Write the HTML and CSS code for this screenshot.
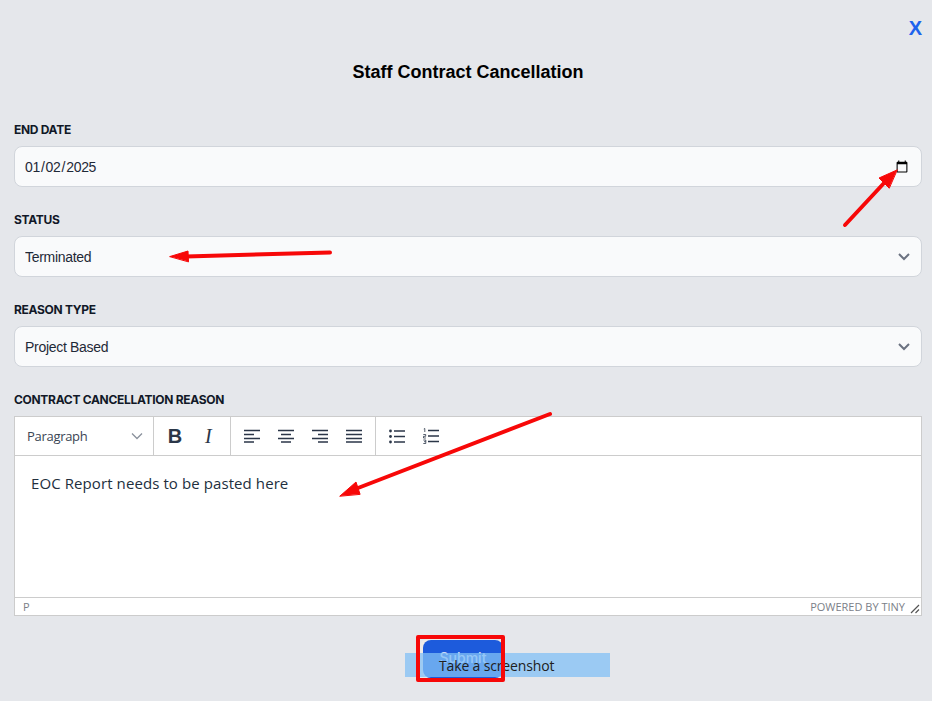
FILE: index.html
```html
<!DOCTYPE html>
<html lang="en">
<head>
<meta charset="utf-8">
<title>Staff Contract Cancellation</title>
<link rel="stylesheet" href="styles.css">
</head>
<body>
<main class="page">
  <div class="close-row"><button class="close" type="button">X</button></div>
  <h1 class="title">Staff Contract Cancellation</h1>
  <form class="form">
    <div class="field">
      <label class="label" for="end">END DATE</label>
      <input class="control" id="end" type="date" value="2025-01-02">
    </div>
    <div class="field">
      <label class="label" for="status">STATUS</label>
      <select class="control select" id="status"><option>Terminated</option></select>
    </div>
    <div class="field">
      <label class="label" for="reason">REASON TYPE</label>
      <select class="control select" id="reason"><option>Project Based</option></select>
    </div>
    <div class="field">
      <span class="label">CONTRACT CANCELLATION REASON</span>
      <div class="editor">
        <div class="toolbar">
          <div class="group group-format">
            <span>Paragraph</span>
            <svg class="fmt-chev" width="12" height="8" viewBox="0 0 12 8"><path d="M1 1.500l5 5 5-5" fill="none" stroke="#8a919c" stroke-width="1.300"/></svg>
          </div>
          <div class="group group-style">
            <span class="tool-b">B</span>
            <span class="tool-i">I</span>
          </div>
          <div class="group group-align">
            <svg class="tool" width="16" height="14" viewBox="0 0 16 14"><path d="M0 1.500h16M0 5.500h10M0 9.500h16M0 13h10" stroke="#2b3648" stroke-width="1.500"/></svg>
            <svg class="tool" width="16" height="14" viewBox="0 0 16 14"><path d="M0 1.500h16M3 5.500h10M0 9.500h16M3 13h10" stroke="#2b3648" stroke-width="1.500"/></svg>
            <svg class="tool" width="16" height="14" viewBox="0 0 16 14"><path d="M0 1.500h16M6 5.500h10M0 9.500h16M6 13h10" stroke="#2b3648" stroke-width="1.500"/></svg>
            <svg class="tool" width="16" height="14" viewBox="0 0 16 14"><path d="M0 1.500h16M0 5.500h16M0 9.500h16M0 13h16" stroke="#2b3648" stroke-width="1.500"/></svg>
          </div>
          <div class="group group-lists">
            <svg class="tool" width="16" height="15" viewBox="0 0 16 15"><path d="M5 2h11M5 7.500h11M5 13h11" stroke="#2b3648" stroke-width="1.500"/><circle cx="1.500" cy="2" r="1.400" fill="#2b3648"/><circle cx="1.500" cy="7.500" r="1.400" fill="#2b3648"/><circle cx="1.500" cy="13" r="1.400" fill="#2b3648"/></svg>
            <svg class="tool" width="16" height="16" viewBox="0 0 16 16"><path d="M5 2.500h11M5 8h11M5 13.500h11" stroke="#2b3648" stroke-width="1.500"/><path d="M.8 1l1-.5V4M.3 6.500h2.400V8.300H.5V10h2.400M.3 12h2.500v3.500H.3M1 13.700h1.800" fill="none" stroke="#2b3648" stroke-width=".8"/></svg>
          </div>
        </div>
        <div class="content">EOC Report needs to be pasted here</div>
        <div class="statusbar">
          <span>P</span>
          <span class="brand">POWERED BY TINY</span>
          <svg class="grip" width="10" height="10" viewBox="0 0 10 10"><path d="M1 9l8-8M5.500 9L9 5.500" stroke="#555" stroke-width="1.200"/></svg>
        </div>
      </div>
    </div>
    <div class="actions">
      <button class="submit" type="button">Submit</button>
    </div>
  </form>
</main>

<div class="shot-tip">Take a screenshot</div>
<div class="shot-box"></div>

<svg class="arrows" width="932" height="701" viewBox="0 0 932 701" aria-hidden="true">
  <g fill="#f70808" stroke="#f70808" stroke-linecap="round">
    <path d="M845 225L885 182" stroke-width="4" fill="none"/>
    <path d="M897 170L879 178L889 188Z" stroke-width="1"/>
    <path d="M330 252.500L186 256.500" stroke-width="4" fill="none"/>
    <path d="M170 256.500L188 251L188.500 261.500Z" stroke-width="1"/>
    <path d="M550 414L358 488" stroke-width="4" fill="none"/>
    <path d="M340 496L356 482L360 494Z" stroke-width="1"/>
  </g>
</svg>
</body>
</html>
```
FILE: styles.css
```css
* { box-sizing: border-box; }

html, body {
  margin: 0;
  height: 701px;
  overflow: hidden;
}

body {
  position: relative;
  background: #e5e7eb;
  font-family: "Inter", "Liberation Sans", sans-serif;
  color: #111827;
}

.page {
  padding: 16px 10px 0 14px;
}

.close-row {
  display: flex;
  justify-content: flex-end;
  height: 24px;
}

.close {
  border: 0;
  padding: 0;
  background: none;
  color: #1d63ed;
  font: 700 20px/24px "Liberation Sans", sans-serif;
}

.title {
  margin: 20px 0 0;
  text-align: center;
  font: 700 18px/24px "Liberation Sans", sans-serif;
  color: #000;
}

.form {
  margin-top: 36px;
  display: flex;
  flex-direction: column;
  gap: 23px;
}

.field {
  display: flex;
  flex-direction: column;
}

.label {
  display: block;
  height: 20px;
  margin-bottom: 6px;
  font: 700 12px/20px "Inter", "Liberation Sans", sans-serif;
  letter-spacing: -0.3px;
  color: #111827;
}

.control {
  display: block;
  width: 100%;
  height: 41px;
  margin: 0;
  padding: 0 10px;
  background-color: #f9fafb;
  border: 1px solid #d1d5db;
  border-radius: 8px;
  font: 14px "Liberation Sans", sans-serif;
  letter-spacing: -0.3px;
  color: #1f2937;
}

input.control { padding-left: 9px; }

.select {
  appearance: none;
  padding-right: 32px;
  background-image: url("data:image/svg+xml,%3Csvg xmlns='http://www.w3.org/2000/svg' width='14' height='9' viewBox='0 0 14 9'%3E%3Cpath d='M2 2l5 5 5-5' fill='none' stroke='%236b7280' stroke-width='2'/%3E%3C/svg%3E");
  background-repeat: no-repeat;
  background-position: right 10px center;
}

.editor {
  height: 200px;
  display: flex;
  flex-direction: column;
  background: #fff;
  border: 1px solid #ccc;
}

.toolbar {
  display: flex;
  height: 39px;
  flex: none;
  border-bottom: 1px solid #ccc;
  font-family: "Open Sans", "Noto Sans", sans-serif;
  color: #2b3648;
}

.group {
  display: flex;
  align-items: center;
  border-right: 1px solid #ccc;
}

.group-format {
  width: 139px;
  padding: 0 10px 0 12px;
  justify-content: space-between;
  font-size: 13px;
  letter-spacing: -0.3px;
  color: #3b4554;
}

.group-style { width: 77px; padding-left: 11px; }

.tool-b {
  width: 20px;
  font: 700 20px "Liberation Sans", sans-serif;
  text-align: center;
}

.tool-i {
  margin-left: 20px;
  font: italic 20px "Liberation Serif", serif;
}

.group-align { width: 145px; padding-left: 13px; gap: 18px; }

.group-lists { border-right: 0; padding-left: 13px; gap: 18px; }

.content {
  flex: 1;
  padding: 15px 16px;
  font: 15px/24px "Open Sans", "Noto Sans", sans-serif;
  letter-spacing: 0.09px;
  color: #222f3e;
}

.statusbar {
  position: relative;
  flex: none;
  height: 18px;
  display: flex;
  justify-content: space-between;
  align-items: center;
  padding: 0 16px 0 8px;
  border-top: 1px solid #ccc;
  font: 11px "Open Sans", "Noto Sans", sans-serif;
  color: #7b8088;
}

.grip {
  position: absolute;
  right: 1px;
  bottom: 1px;
}

.actions {
  display: flex;
  justify-content: center;
  margin-top: 1px;
}

.submit {
  width: 80px;
  height: 38px;
  margin-right: 10px;
  padding: 0 0 3px;
  border: 0;
  border-radius: 8px;
  background: #1d5bdc;
  box-shadow: -3px -1px 0 #efebe7;
  color: rgba(255, 255, 255, 0.8);
  font: 500 14px "Inter", sans-serif;
}

.shot-tip {
  position: absolute;
  left: 405px;
  top: 653px;
  width: 205px;
  height: 24px;
  padding-left: 34px;
  background: rgba(130, 192, 245, 0.75);
  font: 14px/25px "Open Sans", "Noto Sans", sans-serif;
  letter-spacing: -0.15px;
  color: #202020;
}

.shot-box {
  position: absolute;
  left: 416px;
  top: 635px;
  width: 89px;
  height: 47px;
  border: 4px solid #f70808;
  border-radius: 2px;
}

.arrows {
  position: absolute;
  left: 0;
  top: 0;
  pointer-events: none;
}
```
